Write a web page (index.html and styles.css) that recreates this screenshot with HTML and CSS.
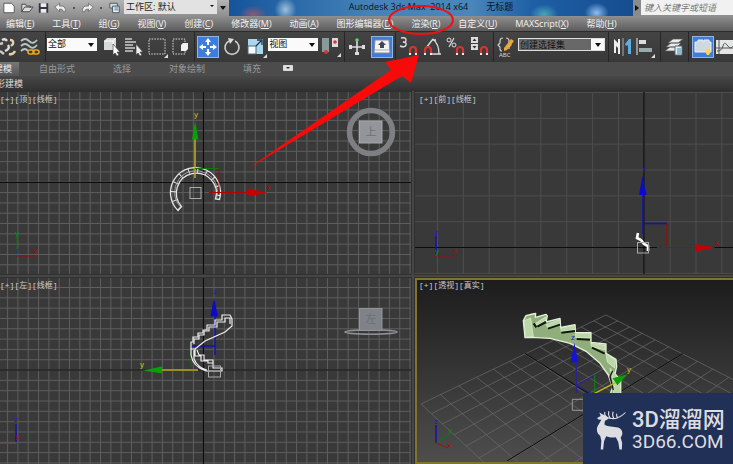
FILE: index.html
```html
<!DOCTYPE html>
<html lang="zh-CN">
<head>
<meta charset="utf-8">
<title>Autodesk 3ds Max 2014 x64</title>
<link rel="stylesheet" href="styles.css">
</head>
<body>
<header class="titlebar">
  <div class="quick">
    <button class="qbtn" aria-label="新建"><svg viewBox="0 0 18 14"><path d="M5 2h6l3 3v7H3V2z" fill="#fff" stroke="#555"/></svg></button>
    <button class="qbtn" aria-label="打开"><svg viewBox="0 0 18 14"><path d="M4 11V3h4l1 2h4v2M4 11l3-5h9l-4 5z" fill="#ddd" stroke="#444"/></svg></button>
    <button class="qbtn" aria-label="保存"><svg viewBox="0 0 18 14"><path d="M4 2h10v10H4z" fill="#334"/><path d="M6 2h6v4H6zM6 8h6v4H6z" fill="#eee"/></svg></button>
    <button class="qbtn" aria-label="撤消"><svg viewBox="0 0 18 14"><path d="M8 2v3h3q4 1 3 6h-2q0-3-4-3v3L3 6z" fill="#eee" stroke="#555" stroke-width=".7"/></svg></button>
    <span class="dot"></span>
    <button class="qbtn" aria-label="重做"><svg viewBox="0 0 18 14"><path d="M10 2v3H7q-4 1-3 6h2q0-3 4-3v3l5-5z" fill="#eee" stroke="#555" stroke-width=".7"/></svg></button>
    <span class="dot"></span>
    <button class="qbtn" aria-label="项目"><svg viewBox="0 0 18 14"><path d="M4 2h8v5H4z" fill="#cde" stroke="#555"/><path d="M7 5h7v7H7z" fill="#eee" stroke="#456"/><path d="M9 7h4M9 9h4" stroke="#47a"/></svg></button>
  </div>
  <div class="pick workspace"><select aria-label="工作区"><option>工作区: 默认</option></select></div>
  <button class="more" aria-label="自定义"></button>
  <h1 class="caption"><span>Autodesk 3ds Max&nbsp; 2014 x64</span><span>无标题</span></h1>
  <button class="play" aria-label="展开"></button>
  <input class="search" type="text" aria-label="搜索" placeholder="键入关键字或短语">
</header>
<nav class="menu">
  <a href="#">编辑(<u>E</u>)</a><a href="#">工具(<u>T</u>)</a><a href="#">组(<u>G</u>)</a><a href="#">视图(<u>V</u>)</a><a href="#">创建(<u>C</u>)</a><a href="#">修改器(<u>M</u>)</a><a href="#">动画(<u>A</u>)</a><a href="#">图形编辑器(<u>D</u>)</a><a href="#">渲染(<u>R</u>)</a><a href="#">自定义(<u>U</u>)</a><a href="#">MAXScript(<u>X</u>)</a><a href="#">帮助(<u>H</u>)</a>
</nav>
<div class="toolbar">
  <div class="group g-link">
    <button class="tool" aria-label="断开链接"><svg viewBox="0 0 22 22"><g fill="none" stroke-width="2.400"><path d="M7 4q3-2 5 1M13 9q2 3-1 5l-2 1" stroke="#ddd"/><path d="M15 4q4 0 3 4l-2 2M14 18q4 1 6-3" stroke="#e8d3ae"/><path d="M5 8l3-1M5 15l4 3" stroke="#ccc"/></g></svg></button>
    <button class="tool" aria-label="绑定到空间扭曲"><svg viewBox="0 0 22 22"><path d="M2 5q4-4 8 0t8-1M2 10q4-4 8 0t8-1M2 15q4-4 7 0" fill="none" stroke="#b9c6c9" stroke-width="1.800"/><rect x="9" y="14" width="6" height="4" rx="2" fill="none" stroke="#e9a81c" stroke-width="1.600"/><rect x="14" y="14" width="6" height="4" rx="2" fill="none" stroke="#e9a81c" stroke-width="1.600"/></svg></button>
  </div>
  <div class="group g-select">
    <div class="pick filter"><select aria-label="选择过滤器"><option>全部</option></select></div>
    <button class="tool" aria-label="选择对象"><svg viewBox="0 0 22 22"><path d="M5 5l3-3h9v9l-3 3H5z" fill="#d6dada"/><path d="M5 5h9v9M14 5l3-3" fill="none" stroke="#fff"/><path d="M14 8v11l2-2 2 3 2-1-2-3h3z" fill="#fff" stroke="#444" stroke-width=".7"/></svg></button>
    <button class="tool" aria-label="按名称选择"><svg viewBox="0 0 22 22"><path d="M2 3h7M2 6h11M2 9h8M2 12h10M2 15h8" stroke="#cdcdcd" stroke-width="1.400"/><path d="M13 8v11l2-2 2 3 2-1-2-3h3z" fill="#eee" stroke="#444" stroke-width=".7"/></svg></button>
    <button class="tool" aria-label="矩形选择区域"><svg viewBox="0 0 22 22"><path d="M3 3h16v15H3z" fill="none" stroke="#ddd" stroke-dasharray="1.500 1.200"/><path d="M22 18v4h-4z" fill="#ddd"/></svg></button>
    <button class="tool" aria-label="窗口/交叉"><svg viewBox="0 0 22 22"><path d="M3 3h12v15H3z" fill="none" stroke="#ddd" stroke-dasharray="1.500 1.200"/><path d="M11 9l2-2h5v6l-2 2h-5z" fill="#eef2f2"/></svg></button>
  </div>
  <div class="group g-move">
    <button class="tool on" aria-label="选择并移动"><svg viewBox="0 0 22 22"><path d="M11 2l3 4h-2v3h-2V6H8zM11 20l3-4h-2v-3h-2v3H8zM2 11l4-3v2h3v2H6v2zM20 11l-4-3v2h-3v2h3v2z" fill="#fff"/></svg></button>
    <button class="tool" aria-label="选择并旋转"><svg viewBox="0 0 22 22"><path d="M14 5A7 7 0 1 1 8 5" fill="none" stroke="#c9cdcd" stroke-width="1.700"/><path d="M7 2l6 1-4 5z" fill="#ddd"/></svg></button>
    <button class="tool" aria-label="选择并缩放"><svg viewBox="0 0 22 22"><path d="M3 3h15v15H3z" fill="#a9d8ee"/><path d="M3 10h8v8H3z" fill="#f3fbff" stroke="#567"/><path d="M11 10l5-5M12 4h5v5" fill="none" stroke="#234" stroke-width="1.300"/><path d="M22 18v4h-4z" fill="#ddd"/></svg></button>
    <div class="pick coord"><select aria-label="参考坐标系"><option>视图</option></select></div>
    <button class="tool" aria-label="使用轴点中心"><svg viewBox="0 0 22 22"><path d="M2 2h7v14H2z" fill="#899"/><path d="M12 2h6v9h-6z" fill="#d9dddd"/><circle cx="6" cy="16" r="2" fill="#d33"/><circle cx="15" cy="6" r="1.800" fill="#d33"/><path d="M21 17v4h-4z" fill="#ddd"/></svg></button>
  </div>
  <div class="group g-manip">
    <button class="tool" aria-label="选择并操纵"><svg viewBox="0 0 22 22"><path d="M10 5v12M4 11h12" stroke="#ddd" stroke-width="1.600"/><circle cx="10" cy="4" r="1.800" fill="#6ccf6c"/><path d="M2 9h3v4H2zM15 9h3v4h-3zM8 16h4v3H8z" fill="#ddd"/></svg></button>
    <button class="tool on" aria-label="键盘快捷键覆盖"><svg viewBox="0 0 22 22"><path d="M4 4h14l1 13H3z" fill="#f2f4f2" stroke="#889"/><path d="M4 14h14" stroke="#aab"/><path d="M11 5l4 4h-2v3H9V9H7z" fill="#445"/></svg></button>
  </div>
  <div class="group g-snap">
    <button class="tool" aria-label="捕捉开关"><svg viewBox="0 0 22 22"><path d="M2 2q5-1 5 2t-3 2q4 0 3 3t-6 1" fill="none" stroke="#ddd" stroke-width="1.400"/><path d="M11 18v-4q0-3 3-3t3 3v4" fill="none" stroke="#d8342e" stroke-width="2.200"/><path d="M10 17h2v2h-2zM16 17h2v2h-2z" fill="#eee"/></svg></button>
    <button class="tool" aria-label="角度捕捉"><svg viewBox="0 0 22 22"><path d="M9 18h10M4 12l7-9M11 3q6 5 6 15M10 4h4" fill="none" stroke="#ddd" stroke-width="1.300"/><path d="M3 18v-4q0-3 3-3t3 3v4" fill="none" stroke="#d8342e" stroke-width="2.200"/><path d="M2 17h2v2H2zM8 17h2v2H8z" fill="#eee"/></svg></button>
    <button class="tool" aria-label="百分比捕捉"><svg viewBox="0 0 22 22"><circle cx="3" cy="4" r="2" fill="none" stroke="#ddd"/><circle cx="8" cy="9" r="2" fill="none" stroke="#ddd"/><path d="M8 2l-5 9" stroke="#ddd" stroke-width="1.200"/><path d="M11 18v-4q0-3 3-3t3 3v4" fill="none" stroke="#d8342e" stroke-width="2.200"/><path d="M10 17h2v2h-2zM16 17h2v2h-2z" fill="#eee"/></svg></button>
    <button class="tool" aria-label="微调器捕捉"><svg viewBox="0 0 22 22"><path d="M2 1h7v6H2zM2 8h7v6H2z" fill="#ddd"/><path d="M3.500 5L5.500 2.500 7.500 5zM3.500 10h4l-2 2.500z" fill="#333"/><path d="M12 18v-4q0-3 3-3t3 3v4" fill="none" stroke="#d8342e" stroke-width="2.200"/><path d="M11 17h2v2h-2zM17 17h2v2h-2z" fill="#eee"/></svg></button>
  </div>
  <div class="group g-sets">
    <button class="tool" aria-label="编辑命名选择集"><svg viewBox="0 0 22 22"><path d="M8 2Q5 2 5 5v2L3 9l2 2v2q0 2 2 2M11 2q3 0 3 3v2l2 2-2 2v2" fill="none" stroke="#ccc" stroke-width="1.200"/><path d="M9 12l7-9 3 2-7 9-3 1z" fill="#eda637"/><text x="4" y="21" class="abc">ABC</text></svg></button>
    <div class="pick sets"><select aria-label="命名选择集"><option>创建选择集</option></select></div>
  </div>
  <div class="group g-align">
    <button class="tool" aria-label="镜像"><svg viewBox="0 0 22 22"><path d="M2 3l4 4V3h2v15H6v-6l-2-2v7H2z" fill="#eee"/><path d="M11 2v18" stroke="#aaa"/><path d="M19 3h-2l-4 5 1 2 2-1v9h3z" fill="#5dade0"/></svg></button>
    <button class="tool" aria-label="对齐"><svg viewBox="0 0 22 22"><path d="M3 2v17" stroke="#ccc" stroke-width="1.200"/><path d="M5 4h7v4H5z" fill="#ddd"/><path d="M5 12h13v4H5z" fill="#9aa"/><path d="M21 18v4h-4z" fill="#ddd"/></svg></button>
  </div>
  <div class="group g-layer">
    <button class="tool" aria-label="层管理器"><svg viewBox="0 0 22 22"><path d="M1 15l5-4h10l-4 4zM2 11l5-4h10l-4 4zM4 7l5-4h10l-5 4z" fill="#e8ecec" stroke="#555" stroke-width=".7"/><path d="M11 10h7v9h-7z" fill="#e9eef2" stroke="#567"/><path d="M13 13h4M13 15h4M13 17h4" stroke="#38a"/></svg></button>
  </div>
  <div class="group g-ribbon">
    <button class="tool on" aria-label="切换功能区"><svg viewBox="0 0 22 22"><path d="M3 6h3V4h5v2h1V4h5v2h2v10H3z" fill="#ced8de" stroke="#eef"/><path d="M16 12l3 3-2 4h-2l-2-4z" fill="#ffd453"/></svg></button>
    <button class="tool" aria-label="曲线编辑器"><svg viewBox="0 0 22 22"><path d="M2 4h20v14H2z" fill="#e4e6e6"/><path d="M5 4v14M2 12h20M3 15q5 0 6-5t4-1 4 3 4-4" fill="none" stroke="#555"/></svg></button>
  </div>
</div>
<div class="tabs">
  <button class="tab active">建模</button><button class="tab">自由形式</button><button class="tab">选择</button><button class="tab">对象绘制</button><button class="tab">填充</button>
  <button class="mini" aria-label="最小化"></button>
</div>
<div class="panelbar">多边形建模</div>
<main class="views">
  <section class="view">
    <svg class="scene" viewBox="0 92 411 182" preserveAspectRatio="xMidYMid slice">
      <g class="fine" data-grid="7.600 10.320 99.700 10.320 0 411 92 274"></g>
      <path d="M0 182.500h411M203.500 92v182" class="axis0"/>
      <path d="M17 255V234" class="gy thin"/><path d="M17 256h18" class="rx thin"/>
      <text x="15" y="236" class="lab gyt">y</text><text x="33" y="254" class="lab rxt">x</text><text x="15" y="253" class="lab bzt">z</text>
      <g fill="none" stroke="#e6e6e6">
        <path d="M178 210.500A25 25 0 1 1 219.500 199.500L215.500 199A20 20 0 1 0 181.500 206.500z" stroke-width="1.300"/>
        <path d="M180 208.500A22.500 22.500 0 1 1 217.500 199" stroke-width="5" stroke-dasharray="1 8"/>
        <path d="M181 207.500A21.500 21.500 0 1 1 216.500 199" stroke="#bbb" stroke-width=".8"/>
      </g>
      <rect x="190" y="187.500" width="11" height="11" class="pivot"/>
      <path d="M195 178V138" class="yl"/><path d="M195 168.500h24" class="gy"/><path d="M219 168.500V193" class="rx thin"/>
      <path d="M192 139.500L195.200 121l3.200 18.500z" fill="#08a008"/><text x="194" y="117" class="lab ylt">y</text>
      <path d="M209 192.500h40" class="rx"/><path d="M248 188.500l19 4-19 4z" fill="#c60000"/><text x="267" y="190" class="lab rxt">x</text>
      <circle cx="371" cy="132" r="21.500" fill="none" stroke="#7d7f83" stroke-width="5.500"/>
      <rect x="359.500" y="121" width="22.500" height="22" fill="#92959a" stroke="#a5a7aa"/><text x="371" y="136" class="face">上</text>
    </svg>
    <button class="vlabel">[+][顶][线框]</button>
  </section>
  <section class="view">
    <svg class="scene" viewBox="415 92 318 182" preserveAspectRatio="xMidYMid slice">
      <g class="coarse" data-grid="437.500 25.850 92.500 25.850 415 733 92 274"></g>
      <path d="M415 247.500h318M644 92v182" class="axis0"/>
      <path d="M436 254V236" class="bz"/><path d="M436 256h18" class="rx thin"/>
      <text x="434" y="235" class="lab bzt">z</text><text x="453" y="253" class="lab rxt">x</text><text x="435" y="254" class="lab gyt">y</text>
      <path d="M643 234V193M645 223.500h22" class="bz"/><path d="M667 223.500V248M657 247.500h40" class="rx"/>
      <path d="M639 195l3.500-19 4 19z" fill="#0a0ac8"/><text x="642" y="172" class="lab bzt">z</text>
      <path d="M695.500 244l20 3.500-20 4z" fill="#c60000"/><text x="715" y="245" class="lab rxt">x</text>
      <path d="M638 233l-1 5 4 2 3 4 4 2v5" fill="none" stroke="#fff" stroke-width="2.600"/>
      <rect x="637.500" y="242.500" width="11" height="10.500" class="pivot"/>
    </svg>
    <button class="vlabel">[+][前][线框]</button>
  </section>
  <section class="view">
    <svg class="scene" viewBox="0 278 411 186" preserveAspectRatio="xMidYMid slice">
      <g class="fine" data-grid="7.600 10.320 287.500 10.320 0 411 278 464"></g>
      <path d="M0 370h411M203.500 278v186" class="axis0"/>
      <path d="M16 442V424" class="bz"/><path d="M0 443.500h16" class="gy"/>
      <text x="14" y="422" class="lab bzt">z</text><text x="15" y="440" class="lab rxt">x</text>
      <path d="M215 355V316M191 346h24" class="bz"/><path d="M191 345v22" class="gy thin"/>
      <g fill="none" stroke="#eee" stroke-width="1.200">
        <path d="M191 349v-7h2v-5h5v-4h5v-3h4v-5h8v-5h7v-5h8l2 4v7l-7 6-20 9-10 8"/>
        <path d="M194 344v-5h5v-4h5v-4h5v-4h8v-5h8v-4h5v6"/>
        <path d="M191 349h4v7h6v5h7v2h5v5h9v3h-16q-13-4-15-16zM194 350v9q4 9 13 11M197 350l2 5h5v5h9v5"/>
      </g>
      <rect x="208.500" y="366" width="12" height="11" class="pivot"/>
      <path d="M161 370h37" class="yl"/><path d="M162 366.500l-19 4 19 3z" fill="#08a008"/><text x="140" y="367" class="lab ylt">y</text>
      <path d="M210.500 316.500l3.500-19 4 19z" fill="#0a0ac8"/><text x="213" y="294" class="lab bzt">z</text>
      <ellipse cx="371" cy="332" rx="26" ry="2.200" fill="none" stroke="#8e9196" stroke-width="1.500"/>
      <rect x="359.500" y="308.500" width="22.500" height="22" fill="#7f8288" stroke="#92959a"/><text x="371" y="323" class="face">左</text>
    </svg>
    <button class="vlabel">[+][左][线框]</button>
  </section>
  <section class="view current">
    <svg class="scene" viewBox="415 278 318 186" preserveAspectRatio="xMidYMid slice">
      <g class="floor" id="floor"></g>
      <path d="M525 353.500L733 484M683 353.500L507 461" stroke="#0a0a0a"/>
      <path d="M436 443V425" class="bz"/><path d="M436 443l14-9" class="gy"/><path d="M436 443l12 5" class="rx thin"/>
      <text x="434" y="424" class="lab bzt">z</text><text x="448" y="433" class="lab gyt">y</text><text x="447" y="448" class="lab rxt">x</text>
      <g transform="translate(500 300) scale(.3333)" stroke-linejoin="round">
        <path d="M70 62L78 47 98 42 107 40 106 52 138 43 142 48 138 66 180 55 182 82 225 74 226 97 273 98 273 127 318 132 318 160 348 178 350 200 345 222 362 240 362 290H328L338 262 325 225 300 190 260 155 210 130 150 115 95 112 75 113z" fill="#8fae7a" stroke="#e4f0da" stroke-width="4"/>
        <path d="M72 62l20-8 8 56-24 2zM318 160l28 20-2 24-22-18zM330 205l16 16 16 22v40h-22l2-30z" fill="#bcd6a8" stroke="#e4f0da" stroke-width="2"/>
        <path d="M107 70l29-19 3 9-28 16zM138 74l42-16 1 13-38 12zM182 84l43-8 1 13-42 6zM226 101l45-1v13l-43 1zM272 130l44 6-1 14-40-10z" fill="#bcd6a8" stroke="#e4f0da" stroke-width="2"/>
        <path d="M112 80l26-14M144 86l36-12M184 98l41-5M230 117l40 2M276 143l38 18M101 70l8 12" fill="none" stroke="#11180e" stroke-width="6"/>
        <path d="M338 212l-8 18 10 40" fill="none" stroke="#11180e" stroke-width="4"/>
        <path d="M229 278v-95M229 255l54-28M229 255l54 30" fill="none" stroke="#2a2390" stroke-width="4"/>
        <path d="M284 226v54" stroke="#0a8a0a" stroke-width="3"/><path d="M284 280l62-32" stroke="#c5b81a" stroke-width="4"/>
        <path d="M212 187l11-58 12 58z" fill="#1414d8"/><path d="M338 235l45-12-31 33z" fill="#08a008"/>
        <path d="M217 298h33v33h-33z" fill="none" stroke="#999" stroke-width="3"/>
      </g>
      <text x="571" y="340" class="lab bzt">z</text><text x="627" y="372" class="lab ylt">y</text>
    </svg>
    <button class="vlabel">[+][透视][真实]</button>
  </section>
</main>
<aside class="brand">
  <svg class="deer" viewBox="32 45 106 142"><path d="M39 76L51 70 46 58 58 65 70 70 78 76 72 82 65 85 63 98C74 107 94 104 108 108 121 113 124 122 122 132L117 142 122 158 121 181H113L109 156 101 140C90 143 78 140 69 137L62 153 59 181H51L53 151 49 135C36 125 35 108 45 96L53 82 43 81z" fill="#dcdde0"/><path d="M64 72Q90 82 106 76T133 58M71 74Q61 66 65 56M82 76Q74 66 78 54M94 77Q88 68 92 55M106 75Q102 68 104 62" fill="none" stroke="#dcdde0" stroke-width="3.500"/></svg>
  <div class="brandtext"><strong>3D溜溜网</strong><span>3D66.COM</span></div>
</aside>
<svg class="marks" viewBox="0 0 733 464" aria-hidden="true">
  <ellipse cx="421" cy="20" rx="32" ry="14" fill="none" stroke="#ee1212" stroke-width="2"/>
  <path d="M248 168.500L391 70 385 62 419 55 411 83 402 76z" fill="#f80a0a"/>
</svg>
<script src="script.js"></script>
</body>
</html>
```
FILE: styles.css
```css
* { box-sizing: border-box; }
body {
  margin: 0;
  min-height: 100vh;
  position: relative;
  display: flex;
  flex-direction: column;
  overflow: hidden;
  background: #3a3a3a;
  color: #ddd;
  font: 9px/14px "Open Sans", "Noto Sans CJK SC", sans-serif;
}
button, select, input { font: inherit; color: inherit; border: 0; padding: 0; margin: 0; background: none; border-radius: 0; }
svg { display: block; }

.titlebar { display: flex; height: 16px; background: linear-gradient(#b4b4b4, #8f8f8f); }
.quick { display: flex; align-items: center; flex: none; width: 124px; padding-left: 1px; }
.qbtn { width: 17px; height: 14px; flex: none; }
.qbtn svg { width: 17px; height: 14px; }
.dot { width: 2px; height: 2px; margin: 0 4px; background: #555; }
.pick { position: relative; flex: none; }
.pick select { display: block; appearance: none; width: 100%; height: 100%; padding: 0 2px; outline: 0; }
.pick::after {
  content: "";
  position: absolute;
  right: 3px;
  top: 5px;
  border: 3px solid transparent;
  border-top: 4px solid #111;
  border-bottom: 0;
  pointer-events: none;
}
.workspace { width: 93px; height: 14px; background: #e2e2e2; color: #222; }
.workspace::after { border-width: 2px; border-top-width: 2px; }
.more { width: 12px; flex: none; }
.more::after { content: ""; display: block; margin: 0 auto; width: 0; border: 3px solid transparent; border-top: 4px solid #111; border-bottom: 0; }
.caption {
  flex: 1;
  margin: 0;
  display: flex;
  justify-content: center;
  gap: 18px;
  font: inherit;
  color: #0b1320;
  white-space: nowrap;
  background:
    radial-gradient(ellipse 14px 9px at 6% 90%, #8b5a74, transparent),
    radial-gradient(ellipse 11px 12px at 14% 60%, #9cc0dc, transparent),
    radial-gradient(ellipse 14px 10px at 78% 90%, #4ba5b4, transparent),
    radial-gradient(ellipse 12px 10px at 91% 80%, #8fbdf0, transparent),
    linear-gradient(90deg, #15549a, #4482b8 35%, #4a86bb 60%, #1e5fa5 75%, #164d8f);
}
.play { width: 8px; flex: none; background: #8b8b8b; display: flex; align-items: center; justify-content: center; }
.play::after { content: ""; border: 3px solid transparent; border-left: 4px solid #111; border-right: 0; }
.search { flex: none; width: 92px; height: 15px; padding: 0 3px; background: #f1f1f1; }
.search::placeholder { color: #777; font-style: italic; }

.menu { display: flex; gap: 18px; height: 15px; padding-left: 6px; background: linear-gradient(#8f8f8f, #5c5c5c); white-space: nowrap; }
.menu a { color: #f2f2f2; text-decoration: none; line-height: 16px; }

.toolbar { display: flex; height: 31px; background: linear-gradient(#444, #383838); overflow: hidden; border-top: 1px solid #2c2c2c; }
.group { display: flex; flex: none; align-items: center; justify-content: space-between; }
.group + .group { border-left: 1px solid #262626; }
.tool { width: 22px; height: 22px; flex: none; }
.tool svg { width: 22px; height: 22px; }
.tool.on { background: #3f7dd8; outline: 1px solid #8fb4e6; outline-offset: -1px; }
.abc { font: 6px "Open Sans", sans-serif; fill: #ddd; }
.toolbar .pick { height: 13px; margin-bottom: 6px; background: #fafafa; color: #111; }
.toolbar .pick select { line-height: 12px; padding: 0 1px; }
.g-link { width: 50px; margin-left: -5px; padding-right: 4px; }
.g-select { width: 149px; padding: 0 2px 0 1px; }
.g-move { width: 150px; padding: 0 2px; }
.g-manip { width: 51px; padding: 0 2px; }
.g-snap { width: 98px; padding: 0 2px 0 3px; }
.g-sets { width: 115px; padding: 0 3px 0 1px; }
.g-align { width: 52px; padding: 0 4px 0 3px; }
.g-layer { width: 28px; padding-left: 3px; }
.g-ribbon { width: 48px; padding-left: 3px; }
.filter, .coord { width: 50px; }
.toolbar .sets { width: 87px; background: linear-gradient(90deg, #686868 72px, #fafafa 72px); border: 1px solid #ddd; }
.toolbar .sets::after { top: 4px; }

.tabs { display: flex; height: 14px; background: #4c4c4c; color: #999; }
.tab { margin-right: 38px; line-height: 14px; }
.tab.active { margin: 0 20px 0 -7px; padding: 0 7px 0 1px; background: linear-gradient(#777, #555); color: #eee; }
.mini { width: 10px; height: 6px; margin: 3px 0 0 -16px; border-radius: 1px; background: #ddd; position: relative; }
.mini::after { content: ""; position: absolute; left: 3px; top: 2px; border: 2px solid transparent; border-top-color: #333; }
.panelbar { height: 15px; margin-left: -22px; background: linear-gradient(#484848, #303030); line-height: 15px; }

.views {
  flex: 1;
  min-height: 0;
  display: grid;
  grid-template-columns: minmax(0, 411fr) minmax(0, 318fr);
  grid-template-rows: minmax(0, 182fr) minmax(0, 186fr);
  gap: 4px;
  padding-top: 1px;
  background: #464646;
}
.view { position: relative; background: #393939; outline: 1px solid #303030; overflow: hidden; }
.view.current { background: linear-gradient(#1c1c1c, #4e4e4e); }
.view.current::after { content: ""; position: absolute; inset: 0; border: 2px solid #84732c; border-right: 0; pointer-events: none; }
.scene { position: absolute; inset: 0; width: 100%; height: 100%; }
.vlabel { position: absolute; left: 0; top: 3px; color: #ccc; font: 8px/10px "Liberation Mono", "Noto Sans CJK SC", monospace; white-space: nowrap; }
.view:nth-child(even) .vlabel { left: 4px; }
.fine { stroke: #5e5e5e; }
.coarse { stroke: #4e4e4e; }
.floor { stroke: #6a6a6a; stroke-width: .7; fill: none; }
.axis0 { stroke: #0c0c0c; stroke-width: 1.2; }
.gy { stroke: #0a7a0a; }
.rx { stroke: #b40000; }
.bz { stroke: #1010b8; stroke-width: 1.4; }
.yl { stroke: #bdb01c; stroke-width: 1.5; }
.thin { stroke-width: .8; }
.pivot { fill: none; stroke: #aaa; }
.lab { font: 8px "Open Sans", sans-serif; }
.ylt { fill: #d8cc20; }
.gyt { fill: #0a8a0a; }
.rxt { fill: #b80808; }
.bzt { fill: #1c1cc8; }
.face { font: 11px "Noto Sans CJK SC", sans-serif; fill: #6c7076; text-anchor: middle; }

.brand {
  position: absolute;
  right: 0;
  bottom: 0;
  width: 150px;
  height: 71px;
  display: flex;
  align-items: center;
  gap: 5px;
  padding: 2px 0 0 12px;
  background: #213056;
  color: #dcdde0;
}
.deer { width: 32px; height: 44px; flex: none; }
.brandtext { display: flex; flex-direction: column; white-space: nowrap; }
.brandtext strong { font: 500 22px/24px "Roboto", "Noto Sans CJK SC", sans-serif; }
.brandtext span { font: 19px/20px "Roboto", sans-serif; }
.marks { position: absolute; inset: 0; width: 100%; height: 100%; pointer-events: none; }
```
FILE: script.js
```js
// Orthographic grids: x start, x step, y start, y step, then left, right, top, bottom.
document.querySelectorAll("[data-grid]").forEach((g) => {
  const [x0, dx, y0, dy, l, r, t, b] = g.dataset.grid.split(" ").map(Number);
  let d = "";
  for (let x = x0; x < r; x += dx) d += `M${x} ${t}V${b}`;
  for (let y = y0; y < b; y += dy) d += `M${l} ${y}H${r}`;
  g.innerHTML = `<path d="${d}"/>`;
});

// Ground plane of the perspective view.
const project = (u, v) => {
  const w = 1 - 0.221 * u - 0.221 * v;
  return `${(606 - 278 * u + 2.6 * v) / w} ${(315 - 0.3 * (u + v)) / w}`;
};
const cells = 12;
let plane = "";
for (let i = 0; i <= cells; i++) {
  const k = i / cells;
  plane += `M${project(k, 0)}L${project(k, 1)}M${project(0, k)}L${project(1, k)}`;
}
document.getElementById("floor").innerHTML = `<path d="${plane}"/>`;
```
